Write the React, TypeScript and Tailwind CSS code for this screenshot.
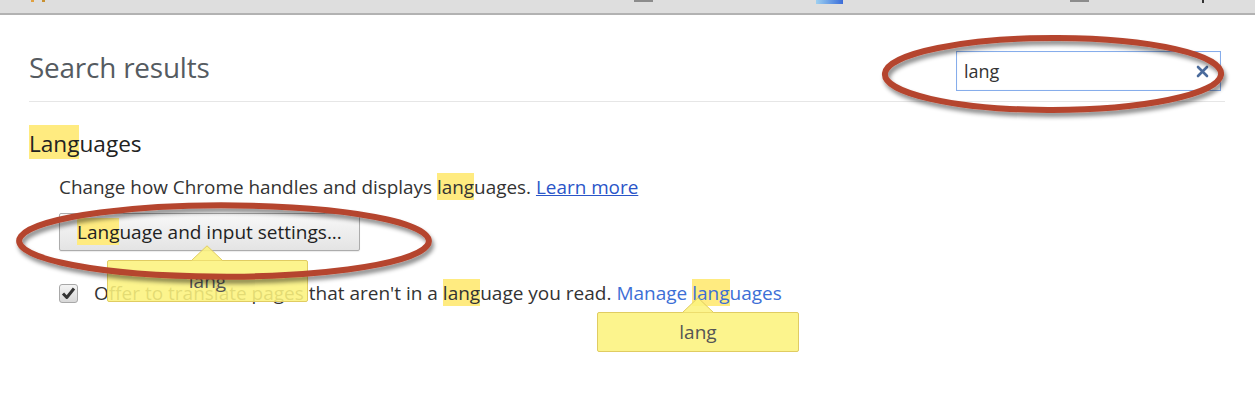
import React from "react";

const HL = ({ children, cls = "" }: { children: React.ReactNode; cls?: string }) => (
  <span className={"bg-[#ffeb80] " + cls}>{children}</span>
);

function Tip({ cls, arrowLeft }: { cls: string; arrowLeft: string }) {
  return (
    <div className={"absolute z-10 " + cls}>
      <svg className={"absolute top-[-15px] " + arrowLeft} width="32" height="16" viewBox="0 0 32 16">
        <path d="M0.5 15.5 L16 0.8 L31.5 15.5" fill="rgba(252,242,125,0.88)" stroke="#e0cc62" strokeWidth="1" />
      </svg>
      <div className="w-full h-full rounded-[2px] border border-[#e0cc62] bg-[rgba(252,242,125,0.88)] flex items-center justify-center text-[19px] text-[#555]">
        lang
      </div>
    </div>
  );
}

export default function App() {
  return (
    <div
      className="relative w-[1255px] h-[409px] bg-white overflow-hidden text-[#333]"
      style={{ fontFamily: '"Open Sans", "Noto Sans", sans-serif' }}
    >
      {/* browser chrome strip */}
      <div className="h-[15px] bg-[#dedede] border-b-2 border-[#b2b2b2] flex items-start">
        <div className="ml-[31px] w-[3px] h-[2px] bg-[#e0a040]" />
        <div className="ml-[8px] w-[3px] h-[2px] bg-[#c89030]" />
        <div className="ml-[589px] w-[19px] h-[2px] bg-[#8c8c8c]" />
        <div className="ml-[163px] w-[27px] h-[4px] bg-gradient-to-r from-[#9fd0f0] to-[#3c6cd8]" />
        <div className="ml-[227px] w-[19px] h-[2px] bg-[#8c8c8c]" />
        <div className="ml-[113px] w-[2px] h-[3px] bg-[#333]" />
      </div>

      <div className="pl-[29px] pr-[30px]">
        {/* header row */}
        <div className="h-[87px] flex justify-between items-start border-b border-[#e6e6e6]">
          <h1 className="mt-[34px] text-[27.9px] leading-[36px] text-[#555b61] font-normal tracking-[-0.2px]">
            Search results
          </h1>
          <div className="mt-[36px] mr-[4px] w-[265px] h-[40px] border border-[#86adeb] flex items-center pl-[7px] pr-[11px] shadow-[inset_0_0_1px_#c8dcf8]">
            <span className="flex-1 text-[18px] text-[#333]">lang</span>
            <svg width="13" height="13" viewBox="0 0 13 13">
              <path d="M2 2 L11 11 M11 2 L2 11" stroke="#4a6b9c" strokeWidth="2.6" strokeLinecap="round" />
            </svg>
          </div>
        </div>

        {/* Languages section */}
        <h2 className="mt-[26px] text-[22.6px] leading-[32px] font-normal text-[#222]">
          <HL cls="pt-[3px]">Lang</HL>uages
        </h2>

        <div className="pl-[30px]">
          <p className="mt-[14px] text-[18.9px] leading-[26px] text-[#333]">
            Change how Chrome handles and displays <HL cls="pt-[1px]">lang</HL>uages.{" "}
            <a className="text-[#2a55c8] underline">Learn more</a>
          </p>

          <div className="relative mt-[13px] w-fit">
            <button className="h-[38px] px-[17px] border border-[#acacac] rounded-[2px] bg-gradient-to-b from-[#f8f8f8] to-[#e4e4e4] text-[19px] text-[#222] shadow-[0_1px_1px_rgba(0,0,0,0.08)]">
              <HL cls="pt-[1px]">Lang</HL>uage and input settings...
            </button>
            <Tip cls="left-[48px] top-[47px] w-[201px] h-[42px]" arrowLeft="left-[84px]" />
          </div>

          <div className="relative mt-[29px] flex items-center h-[26px]">
            <div className="w-[19px] h-[19px] rounded-[3px] border border-[#a8a8a8] bg-gradient-to-b from-[#f4f4f4] to-[#d8d8d8] flex items-center justify-center">
              <svg width="15" height="14" viewBox="0 0 15 14">
                <path d="M2 7.5 L5.8 11.5 L13 2.5" fill="none" stroke="#333" strokeWidth="3" strokeLinejoin="round" />
              </svg>
            </div>
            <span className="ml-[16px] text-[19px] leading-[26px] text-[#333]">
              Offer to translate pages that aren't in a <HL cls="pt-[1px]">lang</HL>uage you read.{" "}
              <a className="text-[#3d6fd6]">
                Manage <HL cls="pt-[1px]">lang</HL>uages
              </a>
            </span>
            <Tip cls="left-[538px] top-[32px] w-[202px] h-[40px]" arrowLeft="left-[85px]" />
          </div>
        </div>
      </div>

      {/* annotation ellipses */}
      <svg className="absolute inset-0 pointer-events-none z-20" width="1255" height="409">
        <defs>
          <filter id="sh" x="-10%" y="-40%" width="120%" height="180%">
            <feDropShadow dx="2" dy="4" stdDeviation="2" floodColor="#000" floodOpacity="0.45" />
          </filter>
        </defs>
        <g filter="url(#sh)">
          <ellipse
            cx="0"
            cy="0"
            rx="168"
            ry="36"
            fill="none"
            stroke="#b5452f"
            strokeWidth="6"
            vectorEffect="non-scaling-stroke"
            transform="translate(1053 74) rotate(0.3) skewX(-8)"
          />
        </g>
        <g filter="url(#sh)">
          <ellipse
            cx="0"
            cy="0"
            rx="203"
            ry="36"
            fill="none"
            stroke="#b5452f"
            strokeWidth="6"
            vectorEffect="non-scaling-stroke"
            transform="translate(224 241) rotate(1.4) skewX(-37)"
          />
        </g>
      </svg>
    </div>
  );
}
